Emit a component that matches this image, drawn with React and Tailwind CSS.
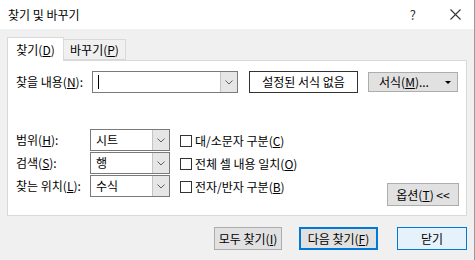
import React from "react";

const font = "font-['Noto_Sans_CJK_KR','Noto_Sans',sans-serif]";

const Combo = ({ width, value, cursor }) => (
  <div
    className={`flex h-[22px] border border-[#7a7a7a] bg-white ${width}`}
  >
    <div className="flex flex-1 items-center pl-[5px] text-[12px] text-black">
      {cursor ? <div className="h-[14px] w-px bg-black" /> : value}
    </div>
    <div className="flex w-[17px] items-center justify-center border-l border-[#c4c4c4] bg-[#e6e6e6]">
      <svg width="8" height="5" viewBox="0 0 8 5">
        <path d="M0.5 0.5 L4 4 L7.5 0.5" fill="none" stroke="#606060" strokeWidth="1" />
      </svg>
    </div>
  </div>
);

const Check = ({ children }) => (
  <div className="flex h-[23px] items-center">
    <div className="h-[12px] w-[12px] border border-[#333333] bg-white" />
    <span className="ml-[3px] text-[12px] text-black">{children}</span>
  </div>
);

const Button = ({ className, children }) => (
  <div
    className={`flex items-center justify-center text-[12px] text-black ${className}`}
  >
    {children}
  </div>
);

export default function App() {
  return (
    <div
      className={`${font} flex h-[260px] w-[475px] flex-col overflow-hidden border-r border-[#9a9a9a] bg-[#f0f0f0] leading-none`}
    >
      {/* title bar */}
      <div className="flex h-[29px] items-center bg-white pl-[8px]">
        <span className="text-[12px] text-black">찾기 및 바꾸기</span>
        <span className="ml-auto text-[13px] text-[#333333]">?</span>
        <svg className="ml-[34px] mr-[13px]" width="11" height="11" viewBox="0 0 11 11">
          <path d="M0.5 0.5 L10.5 10.5 M10.5 0.5 L0.5 10.5" stroke="#333333" strokeWidth="1.1" />
        </svg>
      </div>

      {/* tabs */}
      <div className="ml-[7px] mt-[8px] flex items-end">
        <div className="relative z-10 -mb-px flex h-[24px] w-[57px] items-center justify-center border border-b-0 border-[#d9d9d9] bg-white text-[12px]">
          찾기(<u>D</u>)
        </div>
        <div className="flex h-[21px] w-[62px] items-center justify-center border border-l-0 border-[#d9d9d9] bg-[#f0f0f0] text-[12px]">
          바꾸기(<u>P</u>)
        </div>
      </div>

      {/* panel */}
      <div className="ml-[7px] flex h-[156px] w-[460px] flex-col border border-[#d9d9d9] bg-white">
        <div className="mt-[10px] flex items-center">
          <span className="w-[84px] pl-[8px] text-[12px]">
            찾을 내용(<u>N</u>):
          </span>
          <Combo width="w-[146px]" cursor />
          <div className="ml-[11px] flex h-[22px] w-[109px] items-center justify-center border border-[#333333] text-[12px]">
            설정된 서식 없음
          </div>
          <Button className="ml-[10px] h-[20px] w-[90px] border border-[#adadad] bg-[#e1e1e1]">
            <span className="ml-[10px]">
              서식(<u>M</u>)...
            </span>
            <svg className="ml-auto mr-[6px]" width="6" height="3" viewBox="0 0 6 3">
              <path d="M0 0 L6 0 L3 3 Z" fill="#000" />
            </svg>
          </Button>
        </div>

        <div className="mt-[36px] flex">
          <div className="flex flex-col gap-px">
            <div className="flex items-center">
              <span className="w-[82px] pl-[8px] text-[12px]">
                범위(<u>H</u>):
              </span>
              <Combo width="w-[80px]" value="시트" />
            </div>
            <div className="flex items-center">
              <span className="w-[82px] pl-[8px] text-[12px]">
                검색(<u>S</u>):
              </span>
              <Combo width="w-[80px]" value="행" />
            </div>
            <div className="flex items-center">
              <span className="w-[82px] pl-[8px] text-[12px]">
                찾는 위치(<u>L</u>):
              </span>
              <Combo width="w-[80px]" value="수식" />
            </div>
          </div>
          <div className="ml-[10px] flex flex-col">
            <Check>
              대/소문자 구분(<u>C</u>)
            </Check>
            <Check>
              전체 셀 내용 일치(<u>O</u>)
            </Check>
            <Check>
              전자/반자 구분(<u>B</u>)
            </Check>
          </div>
          <Button className="ml-auto mr-[7px] mt-[54px] h-[23px] w-[72px] border border-[#adadad] bg-[#e1e1e1]">
            옵션(<u>T</u>)&nbsp;&lt;&lt;
          </Button>
        </div>
      </div>

      {/* bottom buttons */}
      <div className="mt-[11px] flex">
        <Button className="ml-[214px] h-[23px] w-[68px] border border-[#adadad] bg-[#e1e1e1]">
          모두 찾기(<u>I</u>)
        </Button>
        <Button className="ml-[17px] h-[23px] w-[79px] border-2 border-[#0078d7] bg-[#e1e1e1]">
          다음 찾기(<u>F</u>)
        </Button>
        <Button className="ml-[19px] h-[23px] w-[70px] border border-[#0078d7] bg-[#e5f1fb]">
          닫기
        </Button>
      </div>
    </div>
  );
}
